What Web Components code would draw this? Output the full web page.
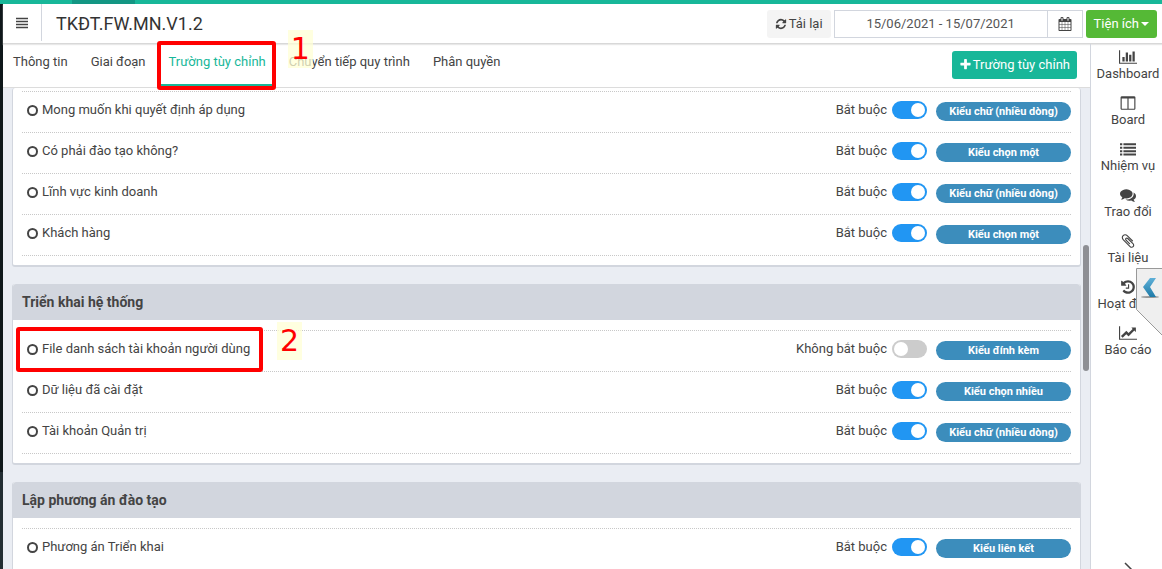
<!DOCTYPE html>
<html lang="vi">
<head>
<meta charset="utf-8">
<title>TKĐT.FW.MN.V1.2</title>
<style>
body { margin: 0; font: 13px/20px Roboto, "Noto Sans", sans-serif; color: #444; }
</style>
</head>
<body>
<app-shell>
  <top-bar slot="header" heading="TKĐT.FW.MN.V1.2" range="15/06/2021 - 15/07/2021"></top-bar>
  <tab-bar slot="tabs">
    <tab-link>Thông tin</tab-link>
    <tab-link>Giai đoạn</tab-link>
    <tab-link active>Trường tùy chỉnh</tab-link>
    <tab-link note="1">Chuyển tiếp quy trình</tab-link>
    <tab-link>Phân quyền</tab-link>
  </tab-bar>
  <field-card continued>
    <field-row kind="Kiểu chữ (nhiều dòng)" required>Mong muốn khi quyết định áp dụng</field-row>
    <field-row kind="Kiểu chọn một" required>Có phải đào tạo không?</field-row>
    <field-row kind="Kiểu chữ (nhiều dòng)" required>Lĩnh vực kinh doanh</field-row>
    <field-row kind="Kiểu chọn một" required>Khách hàng</field-row>
  </field-card>
  <field-card heading="Triển khai hệ thống">
    <field-row kind="Kiểu đính kèm" note="2">File danh sách tài khoản người dùng</field-row>
    <field-row kind="Kiểu chọn nhiều" required>Dữ liệu đã cài đặt</field-row>
    <field-row kind="Kiểu chữ (nhiều dòng)" required>Tài khoản Quản trị</field-row>
  </field-card>
  <field-card heading="Lập phương án đào tạo">
    <field-row kind="Kiểu liên kết" required>Phương án Triển khai</field-row>
  </field-card>
  <side-nav slot="side">
    <nav-item icon="bar">Dashboard</nav-item>
    <nav-item icon="columns">Board</nav-item>
    <nav-item icon="list">Nhiệm vụ</nav-item>
    <nav-item icon="comments">Trao đổi</nav-item>
    <nav-item icon="clip">Tài liệu</nav-item>
    <nav-item icon="history">Hoạt động</nav-item>
    <nav-item icon="line">Báo cáo</nav-item>
  </side-nav>
</app-shell>
<script>
const ICONS = {
  bars: [1792, 'M0 128h1792v190H0zM0 576h1792v190H0zM0 1024h1792v190H0zM0 1472h1792v190H0z'],
  refresh: [1792, 'M1639 1056q0 5-1 7-64 268-268 434.500t-478 166.500q-146 0-282.500-55t-243.500-157l-129 129q-19 19-45 19t-45-19-19-45v-448q0-26 19-45t45-19h448q26 0 45 19t19 45-19 45l-137 137q71 66 161 102t187 36q134 0 250-65t186-179q11-17 53-117 8-23 30-23h192q13 0 22.500 9.500t9.500 22.500zm25-800v448q0 26-19 45t-45 19h-448q-26 0-45-19t-19-45 19-45l138-138q-148-137-349-137-134 0-250 65t-186 179q-11 17-53 117-8 23-30 23h-199q-13 0-22.500-9.500t-9.500-22.500v-7q65-268 270-434.500t480-166.500q146 0 284 55.500t245 156.500l130-129q19-19 45-19t45 19 19 45z'],
  plus: [1792, 'M1600 736v192q0 40-28 68t-68 28h-416v416q0 40-28 68t-68 28h-192q-40 0-68-28t-28-68v-416h-416q-40 0-68-28t-28-68v-192q0-40 28-68t68-28h416v-416q0-40 28-68t68-28h192q40 0 68 28t28 68v416h416q40 0 68 28t28 68z'],
  calendar: [1792, 'M192 1664h288v-288h-288v288zm352 0h320v-288h-320v288zm-352-352h288v-320h-288v320zm352 0h320v-320h-320v320zm-352-384h288v-288h-288v288zm736 736h320v-288h-320v288zm-384-736h320v-288h-320v288zm768 736h288v-288h-288v288zm-384-352h320v-320h-320v320zm-352-864v-288q0-13-9.500-22.500t-22.500-9.500h-64q-13 0-22.500 9.500t-9.500 22.500v288q0 13 9.500 22.500t22.500 9.500h64q13 0 22.500-9.500t9.500-22.500zm736 864h288v-320h-288v320zm-384-384h320v-288h-320v288zm384 0h288v-288h-288v288zm32-480v-288q0-13-9.500-22.500t-22.500-9.500h-64q-13 0-22.500 9.500t-9.500 22.500v288q0 13 9.500 22.500t22.500 9.500h64q13 0 22.500-9.500t9.500-22.500zm384-64v1280q0 52-38 90t-90 38h-1408q-52 0-90-38t-38-90v-1280q0-52 38-90t90-38h128v-96q0-66 47-113t113-47h64q66 0 113 47t47 113v96h384v-96q0-66 47-113t113-47h64q66 0 113 47t47 113v96h128q52 0 90 38t38 90z'],
  bar: [2048, 'M640 896v512h-256v-512h256zm384-512v1024h-256v-1024h256zm1024 1152v128h-2048v-1536h128v1408h1920zm-640-896v768h-256v-768h256zm384-384v1152h-256v-1152h256z'],
  line: [2048, 'M2048 1536v128h-2048v-1536h128v1408h1920zm-128-1248v435q0 21-19.500 29.500t-35.500-7.500l-121-121-633 633q-10 10-23 10t-23-10l-233-233-416 416-192-192 585-585q10-10 23-10t23 10l233 233 464-464-121-121q-16-16-7.500-35.500t29.500-19.500h435q14 0 23 9t9 23z'],
  columns: [1792, 'M224 1536h608v-1152h-640v1120q0 13 9.500 22.500t22.500 9.500zm1376-32v-1120h-640v1152h608q13 0 22.500-9.500t9.500-22.500zm128-1216v1216q0 66-47 113t-113 47h-1344q-66 0-113-47t-47-113v-1216q0-66 47-113t113-47h1344q66 0 113 47t47 113z'],
  list: [1792, 'M0 256h256v224H0zM384 256h1408v224H384zM0 640h256v224H0zM384 640h1408v224H384zM0 1024h256v224H0zM384 1024h1408v224H384zM0 1408h256v224H0zM384 1408h1408v224H384z'],
  comments: [1792, 'M1408 768q0 139-94 257t-256.500 186.500-353.500 68.500q-86 0-176-16-124 88-278 128-36 9-86 16h-3q-11 0-20.500-8t-11.500-21q-1-3-1-6.500t.5-6.500 2-6l2.500-5 3.500-5.500 4-5 4.500-5 4-4.500q5-6 23-25t26-29.500 22.500-29 25-38.500 20.500-44q-124-72-195-177t-71-224q0-139 94-257t256.500-186.500 353.500-68.500 353.500 68.500 256.500 186.500 94 257zm384 256q0 120-71 224.500t-195 176.500q10 24 20.500 44t25 38.500 22.500 29 26 29.500 23 25q1 1 4 4.500t4.500 5 4 5 3.500 5.500l2.500 5 2 6 .5 6.500-1 6.500q-3 14-13 22t-22 7q-50-7-86-16-154-40-278-128-90 16-176 16-271 0-472-132 58 4 88 4 161 0 309-45t264-129q125-92 192-212t67-254q0-77-23-152 129 71 204 178t75 230z'],
  clip: [1792, 'M1596 1385q0 117-79 196t-196 79q-135 0-235-100l-777-776q-113-115-113-271 0-159 110-270t269-111q158 0 273 113l605 606q10 10 10 22 0 16-30.500 46.500t-46.500 30.500q-13 0-23-10l-606-607q-79-77-181-77-106 0-179 75t-73 181q0 105 76 181l776 777q63 63 145 63 64 0 106-42t42-106q0-82-63-145l-581-581q-26-24-60-24-29 0-48 19t-19 48q0 32 25 59l410 410q10 10 10 22 0 16-31 47t-47 31q-12 0-22-10l-410-410q-63-61-63-149 0-82 57-139t139-57q88 0 149 63l581 581q100 98 100 235z'],
  history: [1792, 'M1664 896q0 156-61 298t-164 245-245 164-298 61q-172 0-327-72.500t-264-204.500q-7-10-6.500-22.500t8.500-20.500l137-138q10-9 25-9 16 2 23 12 73 95 179 147t225 52q104 0 198.500-40.500t163.500-109.500 109.500-163.500 40.500-198.500-40.500-198.500-109.500-163.500-163.500-109.500-198.500-40.500q-98 0-188 35.500t-160 101.500l137 138q31 30 14 69-17 40-59 40h-448q-26 0-45-19t-19-45v-448q0-42 40-59 39-17 69 14l130 129q107-101 244.500-156.500t284.500-55.500q156 0 298 61t245 164 164 245 61 298zm-640-288v448q0 14-9 23t-23 9h-320q-14 0-23-9t-9-23v-64q0-14 9-23t23-9h224v-352q0-14 9-23t23-9h64q14 0 23 9t9 23z']
};
const icon = (name, size) => {
  const [box, d] = ICONS[name];
  return `<svg width="${Math.round(size * box / 1792)}" height="${size}" viewBox="0 0 ${box} 1792" fill="currentColor" aria-hidden="true"><path d="${d}"/></svg>`;
};
const define = (name, render) => customElements.define(name, class extends HTMLElement {
  constructor() { super(); this.attachShadow({ mode: 'open' }); }
  connectedCallback() {
    this.shadowRoot.innerHTML = '<style>:host,*{box-sizing:border-box}svg{display:block;flex:none}button,input{font:inherit;color:inherit;margin:0}</style>' + render(this);
  }
});

/* Numbered sticky note that lies over the page */
define('step-number', () => `
<style>
:host{display:block;width:25px;height:38px;background:rgba(255,255,214,.75);color:#f00;font:30px/38px "DejaVu Sans",sans-serif;text-align:center}
</style><slot></slot>`);

define('app-shell', () => `
<style>
:host{display:grid;grid-template:4px auto minmax(0,1fr)/3px minmax(0,1fr) 72px;height:100vh;overflow:hidden;background:#fff}
.accent{grid-column:1/-1;background:linear-gradient(90deg,#18b799 72px,#139683 72px 135px,#18b799 135px)}
.edge{grid-row:2/4;background:linear-gradient(#0f171a 468px,#222d32 468px)}
header{grid-column:2/4}
main{display:flex;flex-direction:column;min-height:0}
.scroll{position:relative;flex:1;min-height:0;overflow:hidden;background:#eaedf3;padding:0 9px}
.thumb{position:absolute;right:1px;top:157px;width:6px;height:126px;border-radius:3px;background:#8e8f94}
</style>
<div class="accent"></div><div class="edge"></div>
<header><slot name="header"></slot></header>
<main><slot name="tabs"></slot><div class="scroll"><slot></slot><div class="thumb"></div></div></main>
<slot name="side"></slot>`);

define('top-bar', el => `
<style>
:host{display:flex;align-items:center;height:40px;padding-right:5px;border-bottom:1px solid #d8d8d8;box-shadow:0 1px 1px #e8e8e8;position:relative}
.menu{width:39px;height:37px;align-self:flex-start;border:0;border-right:1px solid #d2d6de;background:none;padding:0 0 0 13px}
h1{flex:1;margin:0 0 0 14px;font-size:18px;line-height:24px;font-weight:400;color:#333}
.reload{display:flex;align-items:center;gap:2px;height:28px;padding:0 8px;border:0;border-radius:3px;background:#f4f4f4}
.range{display:flex;width:249px;height:28px;margin:0 3px;border:1px solid #d2d6de}
input{flex:1;min-width:0;border:0;padding:0;text-align:center;background:none;color:#555}
.cal{width:35px;border:0;border-left:1px solid #d2d6de;background:none;padding:0 10px}
.tools{display:flex;align-items:center;gap:2px;height:28px;padding:0 8px;border:0;border-radius:3px;background:#55b936;color:#fff}
.tools::after{content:"";border:4px solid transparent;border-top-color:#fff;border-bottom:0}
</style>
<button class="menu" aria-label="Menu">${icon('bars', 12)}</button>
<h1>${el.getAttribute('heading')}</h1>
<button class="reload">${icon('refresh', 12)}<span>Tải lại</span></button>
<div class="range"><input aria-label="Khoảng ngày" value="${el.getAttribute('range')}"><button class="cal" aria-label="Lịch">${icon('calendar', 14)}</button></div>
<button class="tools">Tiện ích</button>`);

define('tab-bar', () => `
<style>
:host{display:flex;align-items:center;height:44px;flex:none;border-bottom:1px solid #dcdcdc;padding:0 13px 2px 0}
nav{display:flex;flex:1;align-self:stretch}
button{display:flex;align-items:center;gap:1px;height:28px;padding:0 7px;border:0;border-radius:3px;background:#18b799;color:#fff}
</style>
<nav><slot></slot></nav><button>${icon('plus', 13)}<span>Trường tùy chỉnh</span></button>`);

define('tab-link', el => `
<style>
:host{display:block;position:relative;margin-right:3px}
a{display:block;height:42px;padding:8px 10px;color:inherit;text-decoration:none}
:host([active]) a{color:#18b799;border-bottom:2px solid #18b799}
.frame{position:absolute;inset:-3px 0 -5px -2px;border:4px solid #f00;border-radius:3px;z-index:2}
step-number{position:absolute;left:9px;top:-14px;z-index:2}
</style>
<a href="#"><slot></slot></a>
${el.hasAttribute('active') ? '<div class="frame"></div>' : ''}
${el.hasAttribute('note') ? `<step-number>${el.getAttribute('note')}</step-number>` : ''}`);

define('field-card', el => `
<style>
:host{display:block;margin-bottom:17px;background:#fff;border:1px solid #d2d6de;border-width:0 1px 2px;border-radius:3px}
h2{margin:0;height:36px;padding:8px 9px;background:#d2d6de;border-radius:3px 3px 0 0;font-size:14px;line-height:20px;font-weight:700}
.rows{padding:10px 9px 9px}
:host([continued]) .rows{padding-top:3px}
.rows::before{content:"";display:block;border-top:1px dotted #c8c8c8}
</style>
${el.hasAttribute('heading') ? `<h2>${el.getAttribute('heading')}</h2>` : ''}
<div class="rows"><slot></slot></div>`);

define('field-row', el => {
  const on = el.hasAttribute('required');
  return `
<style>
:host{display:flex;align-items:center;position:relative;height:41px;padding:0 0 4px 5px;border-bottom:1px dotted #c8c8c8}
.name{flex:1;padding-left:4px}
label{display:flex;align-items:center;gap:5px}
input{appearance:none;width:35px;height:18px;border-radius:9px;background:#ccc;display:flex;align-items:center;padding:0 2px}
input::before{content:"";width:14px;height:14px;border-radius:50%;background:#fff}
input:checked{background:#2196f3;justify-content:flex-end}
.kind{width:135px;height:19px;margin:2px 0 0 9px;border-radius:10px;background:#3c8dbc;color:#fff;font-size:11px;line-height:20px;font-weight:700;text-align:center}
.frame{position:absolute;left:-6px;top:-4px;width:247px;height:45px;border:4px solid #f00;border-radius:3px}
step-number{position:absolute;left:255px;top:-9px}
</style>
<svg width="11" height="11" viewBox="0 0 11 11" fill="none" stroke="#444" stroke-width="2" aria-hidden="true"><circle cx="5.500" cy="5.500" r="4.500"/></svg>
<span class="name"><slot></slot></span>
<label>${on ? 'Bắt buộc' : 'Không bắt buộc'}<input type="checkbox" role="switch" ${on ? 'checked' : ''}></label>
<span class="kind">${el.getAttribute('kind')}</span>
${el.hasAttribute('note') ? `<div class="frame"></div><step-number>${el.getAttribute('note')}</step-number>` : ''}`;
});

define('side-nav', () => `
<style>
:host{display:flex;flex-direction:column;position:relative;min-height:0;border-left:1px solid #d2d6de;padding:5px 0 0 3px;overflow:hidden}
.more{margin-top:auto;border:0;background:none;padding:0;height:7px;overflow:hidden;display:flex;justify-content:center;flex:none}
.flyout{position:absolute;right:0;top:224px;width:26px;height:68px;border:0;padding:0;background:none}
</style>
<slot></slot>
<button class="more" aria-label="Thêm"><svg width="12" height="14" viewBox="0 0 12 14" fill="none" stroke="#444" stroke-width="1.500"><path d="M3 1l6 6-6 6"/></svg></button>
<button class="flyout" aria-label="Mở rộng"><svg width="26" height="68" viewBox="0 0 26 68">
<defs><linearGradient id="g" x1="0" y1="0" x2="0" y2="1"><stop offset="0" stop-color="#5fb0d8"/><stop offset="1" stop-color="#1f7ba8"/></linearGradient></defs>
<path d="M.5.5H28V69L.5 41.500z" fill="#efefef" stroke="#999"/>
<ellipse cx="14" cy="29" rx="9" ry="1" fill="#999"/>
<path d="M14 10h6l-6 9 6 10h-6l-7-10z" fill="url(#g)"/></svg></button>`);

define('nav-item', el => `
<style>
:host{display:block;height:46px;flex:none}
a{display:flex;flex-direction:column;align-items:center;color:inherit;text-decoration:none}
svg{margin-bottom:-1px}
span{white-space:nowrap}
</style>
<a href="#">${icon(el.getAttribute('icon'), 16)}<span><slot></slot></span></a>`);
</script>
</body>
</html>
